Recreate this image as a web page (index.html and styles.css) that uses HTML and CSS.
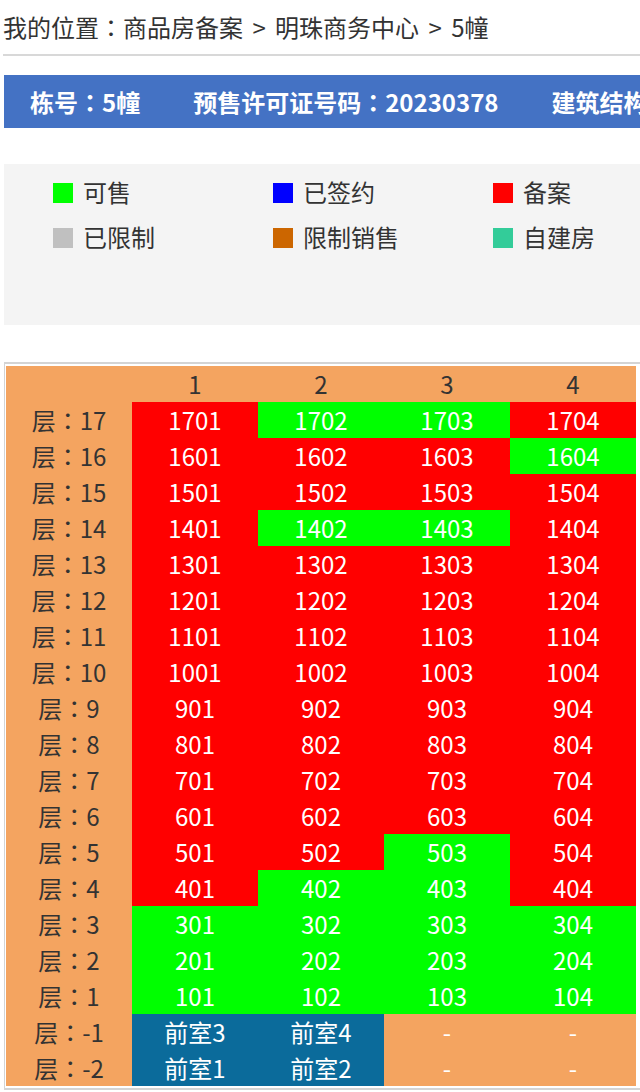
FILE: index.html
```html
<!DOCTYPE html>
<html lang="zh-CN">
<head>
<meta charset="utf-8">
<title>5幢</title>
<link rel="stylesheet" href="styles.css">
</head>
<body>
<div class="page">
  <div class="crumb">我的位置<span class="cl" lang="zh-TW">：</span>商品房备案 &gt; 明珠商务中心 &gt; 5幢</div>
  <div class="infobar">
    <span class="info">栋号<span class="cl" lang="zh-TW">：</span>5幢</span>
    <span class="info">预售许可证号码<span class="cl" lang="zh-TW">：</span>20230378</span>
    <span class="info">建筑结构<span class="cl" lang="zh-TW">：</span>框架结构</span>
  </div>
  <div class="legend">
    <div class="lg-item"><i class="sw sw-green"></i>可售</div>
    <div class="lg-item"><i class="sw sw-blue"></i>已签约</div>
    <div class="lg-item"><i class="sw sw-red"></i>备案</div>
    <div class="lg-item"><i class="sw sw-gray"></i>已限制</div>
    <div class="lg-item"><i class="sw sw-orange"></i>限制销售</div>
    <div class="lg-item"><i class="sw sw-teal"></i>自建房</div>
  </div>
  <div class="grid-wrap">
    <table class="units">
      <thead>
        <tr><th></th><th>1</th><th>2</th><th>3</th><th>4</th></tr>
      </thead>
      <tbody>
        <tr><th>层<span class="cl" lang="zh-TW">：</span>17</th><td class="r">1701</td><td class="g">1702</td><td class="g">1703</td><td class="r">1704</td></tr>
        <tr><th>层<span class="cl" lang="zh-TW">：</span>16</th><td class="r">1601</td><td class="r">1602</td><td class="r">1603</td><td class="g">1604</td></tr>
        <tr><th>层<span class="cl" lang="zh-TW">：</span>15</th><td class="r">1501</td><td class="r">1502</td><td class="r">1503</td><td class="r">1504</td></tr>
        <tr><th>层<span class="cl" lang="zh-TW">：</span>14</th><td class="r">1401</td><td class="g">1402</td><td class="g">1403</td><td class="r">1404</td></tr>
        <tr><th>层<span class="cl" lang="zh-TW">：</span>13</th><td class="r">1301</td><td class="r">1302</td><td class="r">1303</td><td class="r">1304</td></tr>
        <tr><th>层<span class="cl" lang="zh-TW">：</span>12</th><td class="r">1201</td><td class="r">1202</td><td class="r">1203</td><td class="r">1204</td></tr>
        <tr><th>层<span class="cl" lang="zh-TW">：</span>11</th><td class="r">1101</td><td class="r">1102</td><td class="r">1103</td><td class="r">1104</td></tr>
        <tr><th>层<span class="cl" lang="zh-TW">：</span>10</th><td class="r">1001</td><td class="r">1002</td><td class="r">1003</td><td class="r">1004</td></tr>
        <tr><th>层<span class="cl" lang="zh-TW">：</span>9</th><td class="r">901</td><td class="r">902</td><td class="r">903</td><td class="r">904</td></tr>
        <tr><th>层<span class="cl" lang="zh-TW">：</span>8</th><td class="r">801</td><td class="r">802</td><td class="r">803</td><td class="r">804</td></tr>
        <tr><th>层<span class="cl" lang="zh-TW">：</span>7</th><td class="r">701</td><td class="r">702</td><td class="r">703</td><td class="r">704</td></tr>
        <tr><th>层<span class="cl" lang="zh-TW">：</span>6</th><td class="r">601</td><td class="r">602</td><td class="r">603</td><td class="r">604</td></tr>
        <tr><th>层<span class="cl" lang="zh-TW">：</span>5</th><td class="r">501</td><td class="r">502</td><td class="g">503</td><td class="r">504</td></tr>
        <tr><th>层<span class="cl" lang="zh-TW">：</span>4</th><td class="r">401</td><td class="g">402</td><td class="g">403</td><td class="r">404</td></tr>
        <tr><th>层<span class="cl" lang="zh-TW">：</span>3</th><td class="g">301</td><td class="g">302</td><td class="g">303</td><td class="g">304</td></tr>
        <tr><th>层<span class="cl" lang="zh-TW">：</span>2</th><td class="g">201</td><td class="g">202</td><td class="g">203</td><td class="g">204</td></tr>
        <tr><th>层<span class="cl" lang="zh-TW">：</span>1</th><td class="g">101</td><td class="g">102</td><td class="g">103</td><td class="g">104</td></tr>
        <tr><th>层<span class="cl" lang="zh-TW">：</span>-1</th><td class="b">前室3</td><td class="b">前室4</td><td class="o">-</td><td class="o">-</td></tr>
        <tr><th>层<span class="cl" lang="zh-TW">：</span>-2</th><td class="b">前室1</td><td class="b">前室2</td><td class="o">-</td><td class="o">-</td></tr>
      </tbody>
    </table>
  </div>
</div>
</body>
</html>
```

FILE: styles.css
```css
html, body {
  margin: 0;
  padding: 0;
  background: #fff;
  overflow-x: hidden;
}
body {
  font-family: "Noto Sans CJK SC", "Noto Sans", sans-serif;
  color: #333;
}
.page {
  padding-left: 4px;
  width: 760px;
}
.crumb {
  margin-left: -1px;
  padding: 9px 0 9px 0;
  line-height: 36px;
  font-size: 24px;
  color: #333;
  border-bottom: 2px solid #d8d8d8;
  white-space: nowrap;
  word-spacing: 4px;
}
.infobar {
  margin-top: 19px;
  height: 53px;
  line-height: 53px;
  background: #4472c4;
  color: #fff;
  font-size: 24px;
  font-weight: bold;
  padding-left: 26px;
  white-space: nowrap;
  display: flex;
  gap: 53px;
}
.legend {
  margin-top: 36px;
  height: 161px;
  box-sizing: border-box;
  background: #f4f4f4;
  padding: 5px 0 0 49px;
  display: grid;
  grid-template-columns: repeat(3, 220px);
  grid-auto-rows: 45px;
  align-content: start;
}
.lg-item {
  display: flex;
  align-items: center;
  font-size: 24px;
  color: #333;
  white-space: nowrap;
}
.sw {
  width: 20px;
  height: 20px;
  margin-right: 10px;
  display: inline-block;
  position: relative;
  top: 1px;
}
.sw-green { background: #00ff00; }
.sw-blue { background: #0000ff; }
.sw-red { background: #ff0000; }
.sw-gray { background: #c0c0c0; }
.sw-orange { background: #cc6600; }
.sw-teal { background: #33cc99; }
.grid-wrap {
  margin-top: 37px;
  border-top: 2px solid #d4d4d4;
  border-left: 1px solid #d4d4d4;
  border-bottom: 2px solid #d4d4d4;
  padding: 2px 0 2px 1px;
}
.units {
  border-collapse: collapse;
  table-layout: fixed;
  width: 630px;
  background: #f4a460;
}
.units th, .units td {
  width: 126px;
  height: 36px;
  padding: 0;
  line-height: 36px;
  font-size: 24px;
  text-align: center;
  font-weight: normal;
  white-space: nowrap;
}
.units th { color: #333; }
.units td { color: #fff; }
.units td.r { background: #ff0000; }
.units td.g { background: #00ff00; }
.units td.b { background: #0b6b9b; }
.units td.o { background: #f4a460; }
```
